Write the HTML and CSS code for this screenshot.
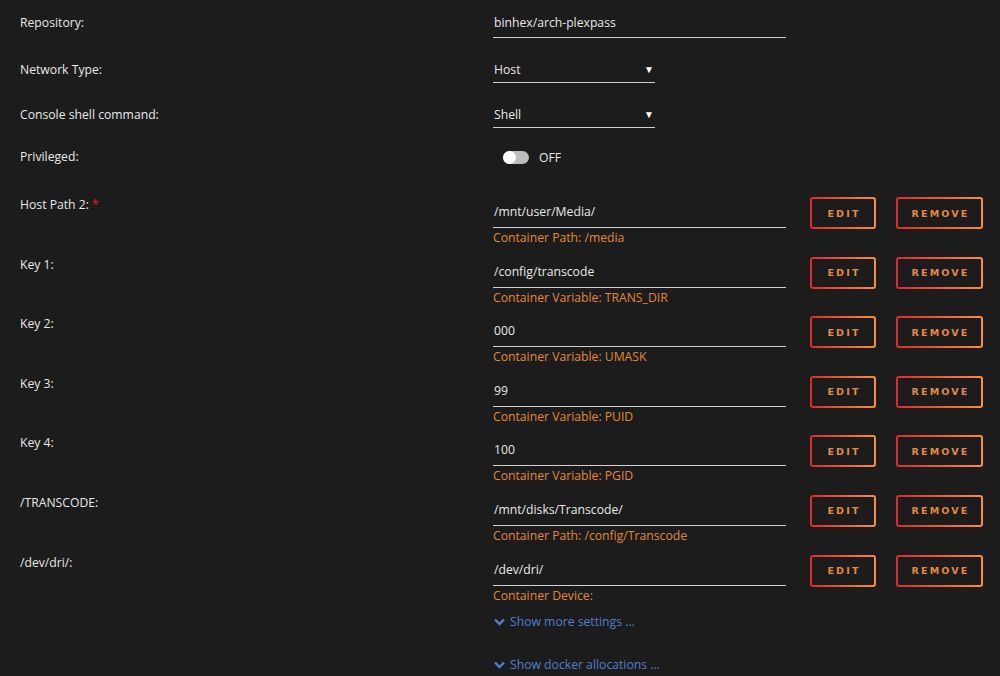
FILE: index.html
```html
<!DOCTYPE html>
<html lang="en">
<head>
    <meta charset="UTF-8">
    <meta name="viewport" content="width=device-width, initial-scale=1.0">
    <title>Container settings</title>
    <link rel="stylesheet" href="styles.css">
</head>
<body>

    <div class="form">

        <div class="row row-repo">
            <div class="label">Repository:</div>
            <div class="field">
                <div class="input">binhex/arch-plexpass</div>
            </div>
        </div>

        <div class="row row-select">
            <div class="label">Network Type:</div>
            <div class="field">
                <div class="select">Host<span class="arrow">&#9660;</span></div>
            </div>
        </div>

        <div class="row row-select">
            <div class="label">Console shell command:</div>
            <div class="field">
                <div class="select">Shell<span class="arrow">&#9660;</span></div>
            </div>
        </div>

        <div class="row row-toggle">
            <div class="label">Privileged:</div>
            <div class="field">
                <div class="switch">
                    <span class="track"><span class="knob"></span></span>
                    <span class="switch-text">OFF</span>
                </div>
            </div>
        </div>

        <!-- path / variable / device rows -->
        <div class="row row-config">
            <div class="label">Host Path 2: <span class="req">*</span></div>
            <div class="field">
                <div class="input">/mnt/user/Media/</div>
                <div class="desc">Container Path: /media</div>
            </div>
            <div class="actions">
                <button class="btn btn-edit">EDIT</button>
                <button class="btn btn-remove">REMOVE</button>
            </div>
        </div>

        <div class="row row-config">
            <div class="label">Key 1:</div>
            <div class="field">
                <div class="input">/config/transcode</div>
                <div class="desc">Container Variable: TRANS_DIR</div>
            </div>
            <div class="actions">
                <button class="btn btn-edit">EDIT</button>
                <button class="btn btn-remove">REMOVE</button>
            </div>
        </div>

        <div class="row row-config">
            <div class="label">Key 2:</div>
            <div class="field">
                <div class="input">000</div>
                <div class="desc">Container Variable: UMASK</div>
            </div>
            <div class="actions">
                <button class="btn btn-edit">EDIT</button>
                <button class="btn btn-remove">REMOVE</button>
            </div>
        </div>

        <div class="row row-config">
            <div class="label">Key 3:</div>
            <div class="field">
                <div class="input">99</div>
                <div class="desc">Container Variable: PUID</div>
            </div>
            <div class="actions">
                <button class="btn btn-edit">EDIT</button>
                <button class="btn btn-remove">REMOVE</button>
            </div>
        </div>

        <div class="row row-config">
            <div class="label">Key 4:</div>
            <div class="field">
                <div class="input">100</div>
                <div class="desc">Container Variable: PGID</div>
            </div>
            <div class="actions">
                <button class="btn btn-edit">EDIT</button>
                <button class="btn btn-remove">REMOVE</button>
            </div>
        </div>

        <div class="row row-config">
            <div class="label">/TRANSCODE:</div>
            <div class="field">
                <div class="input">/mnt/disks/Transcode/</div>
                <div class="desc">Container Path: /config/Transcode</div>
            </div>
            <div class="actions">
                <button class="btn btn-edit">EDIT</button>
                <button class="btn btn-remove">REMOVE</button>
            </div>
        </div>

        <div class="row row-config">
            <div class="label">/dev/dri/:</div>
            <div class="field">
                <div class="input">/dev/dri/</div>
                <div class="desc">Container Device:</div>
            </div>
            <div class="actions">
                <button class="btn btn-edit">EDIT</button>
                <button class="btn btn-remove">REMOVE</button>
            </div>
        </div>

        <div class="more more-settings">
            <svg class="chevron" width="11" height="8" viewBox="0 0 11 8"><path d="M1 1.5 L5.5 6 L10 1.5" fill="none" stroke="#4f7fd0" stroke-width="2.4"/></svg>
            <span>Show more settings ...</span>
        </div>

        <div class="more more-alloc">
            <svg class="chevron" width="11" height="8" viewBox="0 0 11 8"><path d="M1 1.5 L5.5 6 L10 1.5" fill="none" stroke="#4f7fd0" stroke-width="2.4"/></svg>
            <span>Show docker allocations ...</span>
        </div>

    </div>

</body>
</html>
```

FILE: styles.css
```css
* {
    margin: 0;
    padding: 0;
    box-sizing: border-box;
}

body {
    font-family: 'Open Sans', 'Noto Sans', sans-serif;
    font-size: 12.2px;
    background-color: #1c1c1c;
    color: #e8e8e8;
    overflow: hidden;
}

.form {
    padding-left: 20px;
}

.row {
    display: flex;
    align-items: flex-start;
}

.label {
    width: 473px;
    flex-shrink: 0;
    line-height: 20px;
}

.req {
    color: #e02020;
}

.field {
    width: 293px;
    flex-shrink: 0;
}

.input {
    height: 31px;
    line-height: 30px;
    padding-left: 1px;
    border-bottom: 1px solid #cfcfcf;
}

.select {
    position: relative;
    width: 162px;
    height: 27px;
    line-height: 26px;
    padding-left: 1px;
    border-bottom: 1px solid #cfcfcf;
}

.arrow {
    position: absolute;
    right: 1px;
    top: 0;
    font-size: 10px;
    color: #ffffff;
}

/* top rows */
.row-repo {
    margin-top: 7px;
}

.row-repo .label {
    padding-top: 6px;
}

.row-repo .input {
    line-height: 31px;
}

.row-select {
    margin-top: 18px;
}

.row-select .label {
    padding-top: 4px;
}

.row-select .select {
    line-height: 27px;
}

.row-toggle {
    margin-top: 19px;
    height: 20px;
}

.switch {
    display: flex;
    align-items: center;
    height: 20px;
    padding-left: 10px;
}

.track {
    position: relative;
    width: 26px;
    height: 13px;
    border-radius: 7px;
    background-color: #bdbdbd;
}

.knob {
    position: absolute;
    left: 0;
    top: 0;
    width: 13px;
    height: 13px;
    border-radius: 50%;
    background-color: #ffffff;
}

.switch-text {
    margin-left: 10px;
}

/* config rows */
.row-config {
    height: 59.6px;
}

.row-toggle + .row-config {
    margin-top: 23px;
}

.row-config .label {
    padding-top: 5px;
}

.row-config .input {
    margin-top: 7px;
}

.desc {
    line-height: 20px;
    color: #e4892e;
}

.actions {
    display: flex;
    gap: 20px;
    margin-left: 24px;
    margin-top: 7px;
}

.btn {
    height: 32px;
    font-family: 'DejaVu Sans', sans-serif;
    font-size: 9.5px;
    font-weight: bold;
    letter-spacing: 2.2px;
    color: #e98a3c;
    border: 2px solid transparent;
    border-radius: 3px;
    background: linear-gradient(#1c1c1c, #1c1c1c) padding-box,
                linear-gradient(90deg, #e0282a, #ff8f33) border-box;
    cursor: pointer;
    padding-left: 2px;
}

.btn-edit {
    width: 66px;
}

.btn-remove {
    width: 87px;
}

.more {
    display: flex;
    align-items: center;
    gap: 5px;
    margin-left: 474px;
    color: #4f7fd0;
    line-height: 20px;
}

.more-settings {
    margin-top: 5px;
}

.more-alloc {
    margin-top: 23px;
}
```
